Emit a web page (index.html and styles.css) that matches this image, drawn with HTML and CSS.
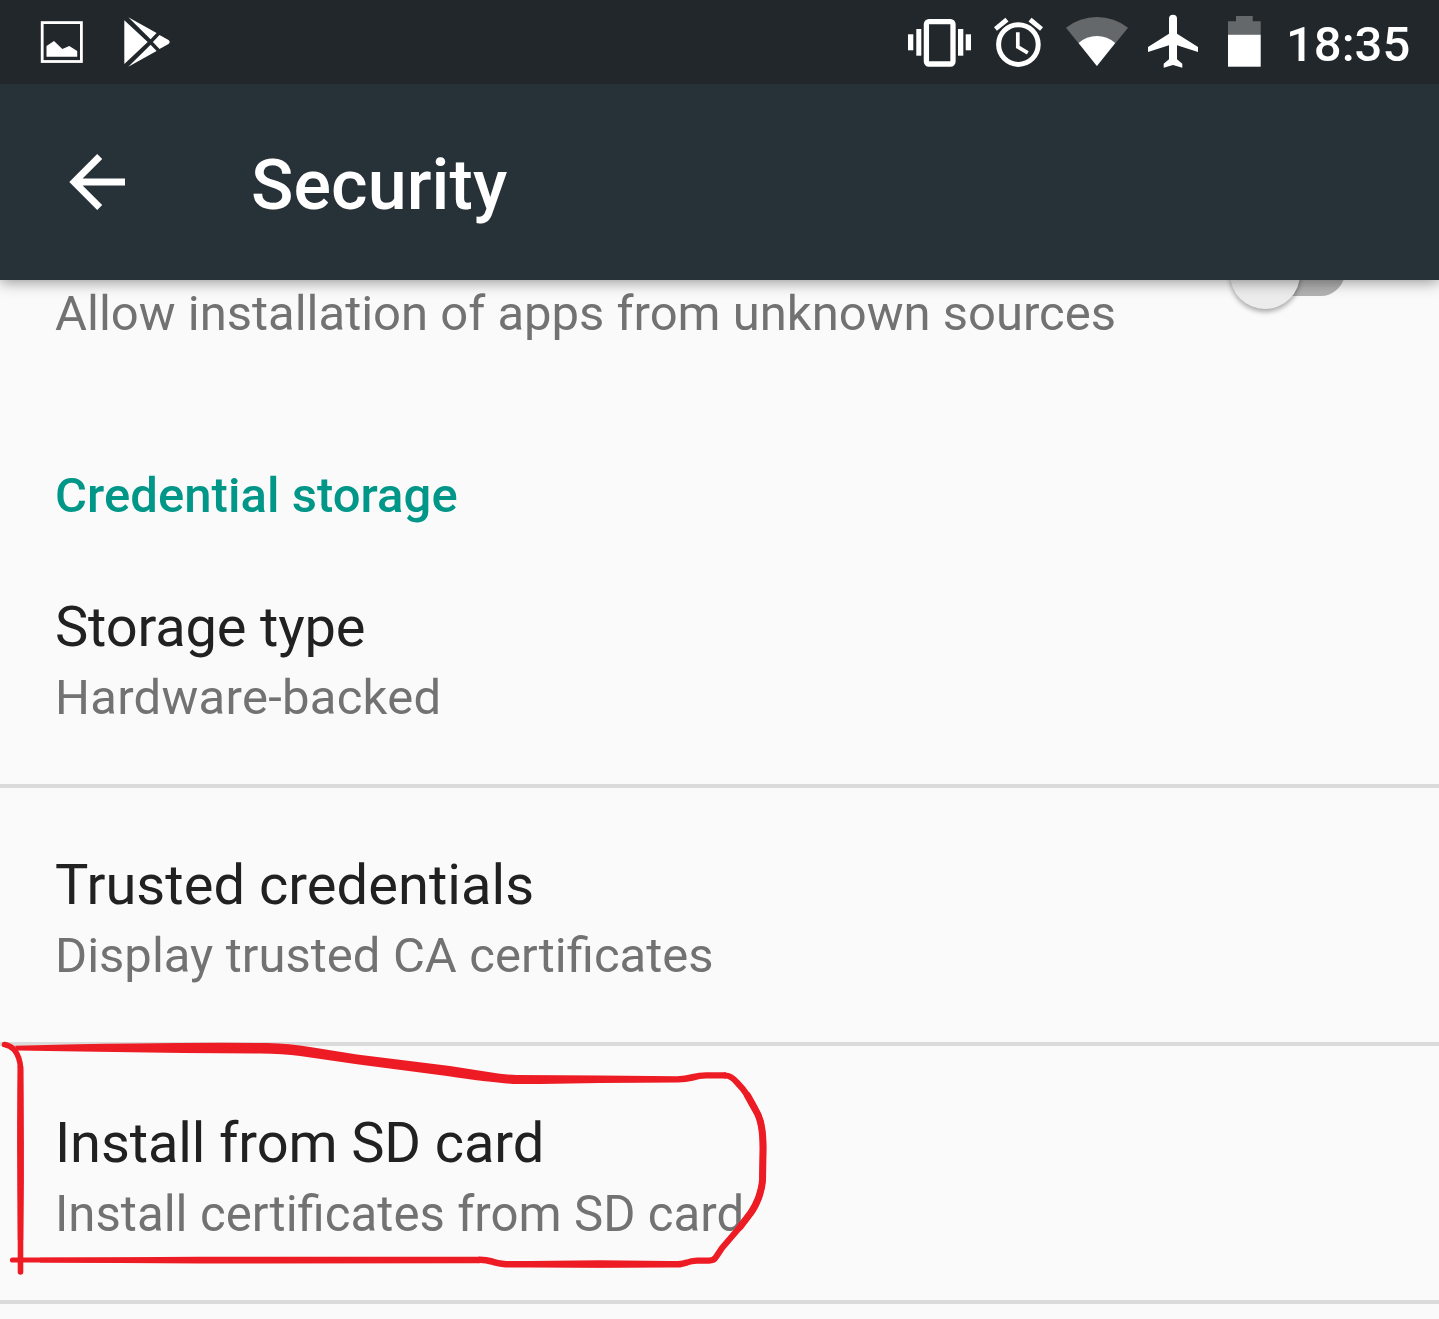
FILE: index.html
```html
<!DOCTYPE html>
<html lang="en">
<head>
<meta charset="utf-8">
<title>Security</title>
<link rel="stylesheet" href="styles.css">
</head>
<body>
<div class="screen">
  <header class="status-bar">
    <div class="status-left">
      <svg width="44" height="84" viewBox="40 0 44 84" fill="#fff"><rect x="42.2" y="22.6" width="39.2" height="38.9" fill="none" stroke="#fff" stroke-width="2.8"/><path d="M46.5 56.8V46L54 41l8.3 8 7-3 7.9 5v5.8z"/></svg>
      <svg width="48" height="84" viewBox="123 0 48 84" fill="#fff"><path d="M124.3 20.2 147.7 42 124.3 64z"/><path d="M128.3 17.3 156.6 33l-6 6.3z"/><path d="M128.3 66.7 156.6 51l-6-6.3z"/><path d="M159.5 35l9 5q2.4 2 0 4l-9 5-6.6-7z"/></svg>
    </div>
    <div class="status-right">
      <svg width="66" height="84" viewBox="906 0 66 84" fill="#fff"><rect x="908" y="34.3" width="5.3" height="16"/><rect x="916.3" y="29" width="5" height="26.7"/><rect x="926.4" y="21.7" width="26.6" height="42.3" rx="2.5" fill="none" stroke="#fff" stroke-width="5.3"/><rect x="958" y="29" width="5.3" height="26.7"/><rect x="965.7" y="34.3" width="5.3" height="16"/></svg>
      <svg width="52" height="84" viewBox="993 0 52 84" fill="#fff"><circle cx="1018.4" cy="44.6" r="19.8" fill="none" stroke="#fff" stroke-width="5"/><path d="M1017.8 32.3v14.6l10 5.9" fill="none" stroke="#fff" stroke-width="3.7"/><path d="M994 27.3l11.4-9.6 3.1 3.7-11.6 9.3zM1043 27.3l-11.4-9.6-3.1 3.7 11.6 9.3z"/></svg>
      <svg width="64" height="84" viewBox="1065 0 64 84" fill="#fff"><path d="M1096.9 66 1066 27.7A50.3 50.3 0 0 1 1128 27.7z" fill-opacity=".3"/><path d="M1096.9 66 1078.6 43A27.2 27.2 0 0 1 1115.2 43z"/></svg>
      <svg width="52" height="84" viewBox="1147 0 52 84" fill="#fff"><path d="M1169 18.7a4 4 0 0 1 8 0v15l21 13.3v5l-21-6.7v14l5.3 4.4v4L1173 65l-9.3 2.7v-4l5.3-4.4v-14l-21 6.7v-5l21-13.3z"/></svg>
      <svg width="34" height="84" viewBox="1227 0 34 84" fill="#fff"><path d="M1228 34.7V21.2h8V16h16.7v5.2h8v13.5z" fill-opacity=".3"/><rect x="1228" y="34.7" width="32.7" height="32"/></svg>
      <span class="clock">18:35</span>
    </div>
  </header>

  <div class="app-bar">
    <svg class="back" width="58" height="60" viewBox="68 152 58 60" fill="#fff"><path d="M69.3 182 97.2 154l5 4.9-19.6 19.5H125v7.2H82.6L102.2 205l-5 5z"/></svg>
    <h1 class="title">Security</h1>
  </div>

  <main class="list">
    <section class="unknown-sources">
      <p class="summary">Allow installation of apps from unknown sources</p>
      <div class="switch"><span class="thumb"></span></div>
    </section>
    <h2 class="category">Credential storage</h2>
    <section class="row storage-type">
      <h3 class="name">Storage type</h3>
      <p class="summary">Hardware-backed</p>
    </section>
    <section class="row trusted">
      <h3 class="name">Trusted credentials</h3>
      <p class="summary">Display trusted CA certificates</p>
    </section>
    <section class="row install">
      <h3 class="name">Install from SD card</h3>
      <p class="summary">Install certificates from SD card</p>
    </section>
  </main>

  <svg class="marker" width="780" height="250" viewBox="0 1035 780 250" fill="none" stroke="#ed1c24" stroke-linecap="round" stroke-linejoin="round">
    <path d="M4.5 1044.6Q10 1045.500 14 1049.500Q20.300 1057 20.500 1069V1272" stroke-width="5.600"/>
    <path d="M17.700 1066H23.300Q24 1130 23.900 1180L23.200 1240H17.800L17.300 1180Q16.800 1120 17.700 1066z" fill="#ed1c24" stroke="none"/>
    <path d="M15 1045.800Q80 1043.800 133 1043.500Q200 1042.500 267 1043Q290 1043.600 310 1047L357 1054.500 450 1066 490 1072.200Q503 1074.600 517 1075L600 1075.500 677 1076.300Q685 1076 692 1074Q699 1072.300 706 1072.300H726V1078.500L706 1078.500Q700 1078.600 693 1080.800Q686 1082.600 678 1082.600L600 1083 540 1083.900H513Q490 1082.500 447 1076L357 1064.300 300 1056Q283 1053.800 260 1053.500L183 1053 80 1051.500 17 1050.500z" fill="#ed1c24" stroke="none"/>
    <path d="M725 1075.500Q731 1075.400 737 1082.500Q743 1088.500 747.500 1095.500L755 1109Q760 1117 761.500 1127Q763.300 1137 763 1152L762.500 1180Q762 1188 758.500 1198Q755 1207 751 1212.500L740 1227 722 1248 716 1257Q714 1260.600 709 1260.600H697Q691 1260.800 687 1262.500Q683 1264 678 1264" stroke-width="6.200"/>
    <path d="M747.500 1095.500L755 1109Q760 1117 761.500 1127Q763.300 1137 763 1152L762.500 1180Q762 1188 758.500 1198Q755 1207 751 1212.500L740 1227" stroke-width="7"/>
    <path d="M680 1264.200H506Q497 1263.500 492 1261.500Q486 1259.800 480 1259.800" stroke-width="6.600"/>
    <path d="M12.500 1260H60Q130 1260.400 200 1260.200H480" stroke-width="5.200"/>
    <path d="M40 1257.700 200 1256.800 480 1256.800V1263.200L200 1263.600 40 1262.500z" fill="#ed1c24" stroke="none"/>
    <path d="M530 1261 600 1260.300 670 1261V1267L600 1267.800 530 1267z" fill="#ed1c24" stroke="none"/>
  </svg>
</div>
</body>
</html>
```
FILE: styles.css
```css
* {
  box-sizing: border-box;
}

body,
h1,
h2,
h3,
p {
  margin: 0;
}

body {
  background: #fafafa;
  font-family: Roboto, sans-serif;
}

svg {
  display: block;
  flex: none;
}

.screen {
  position: relative;
  width: 1439px;
  height: 1319px;
  overflow: hidden;
}

.status-bar {
  position: relative;
  z-index: 2;
  display: flex;
  justify-content: space-between;
  height: 84px;
  padding: 0 29px 0 40px;
  background: #22272b;
}

.status-left {
  display: flex;
  gap: 39px;
}

.status-right {
  display: flex;
  gap: 20px;
}

.status-right svg:nth-of-type(2) {
  margin-left: 1px;
}

.status-right svg:nth-of-type(4) {
  margin-left: -2px;
}

.status-right svg:nth-of-type(5) {
  margin-left: 8px;
}

.clock {
  width: 124px;
  margin-left: 5px;
  color: #fff;
  font-size: 49px;
  font-weight: 500;
  line-height: 58px;
  padding-top: 16px;
  text-align: right;
  white-space: nowrap;
}

.app-bar {
  position: relative;
  z-index: 1;
  display: flex;
  align-items: center;
  height: 196px;
  padding-left: 68px;
  background: #273238;
  box-shadow: 0 2px 14px rgba(0, 0, 0, 0.42);
}

.title {
  margin-left: 125px;
  padding-top: 5px;
  color: #fff;
  font-size: 70px;
  font-weight: 500;
  letter-spacing: 0.1px;
  line-height: 82px;
}

.list {
  display: flex;
  flex-direction: column;
}

.unknown-sources {
  display: flex;
  justify-content: space-between;
  height: 187px;
  padding: 5px 94px 0 55px;
}

.switch {
  width: 104px;
  height: 49px;
  margin-top: -38px;
  border-radius: 25px;
  background: #b2b2b2;
}

.thumb {
  display: block;
  width: 70px;
  height: 70px;
  margin: -8px 0 0 -11px;
  border-radius: 50%;
  background: #ececec;
  box-shadow: 0 3px 5px rgba(0, 0, 0, 0.32);
}

.category {
  height: 63px;
  padding-left: 55px;
  color: #009688;
  font-size: 49px;
  font-weight: 500;
  letter-spacing: 0.05px;
  line-height: 58px;
}

.row {
  height: 258px;
  padding: 64px 55px 0;
  border-bottom: 4px solid #dbdbdb;
}

.name {
  color: #212121;
  font-size: 56px;
  font-weight: 400;
  line-height: 66px;
}

.summary {
  color: #727272;
  font-size: 49px;
  line-height: 58px;
  white-space: nowrap;
}

.row .summary {
  margin-top: 9px;
}

.storage-type .name {
  letter-spacing: -0.17px;
}

.storage-type .summary {
  letter-spacing: 0.27px;
}

.trusted .name {
  letter-spacing: 0.05px;
}

/* Word spacing keeps the "fi" ligature, which letter spacing would break. */
.trusted .summary {
  word-spacing: 0.4px;
}

.install .name {
  letter-spacing: -0.12px;
}

.install .summary {
  font-size: 49.15px;
  word-spacing: 0.2px;
}

.marker {
  position: absolute;
  left: 0;
  top: 1035px;
}
```
